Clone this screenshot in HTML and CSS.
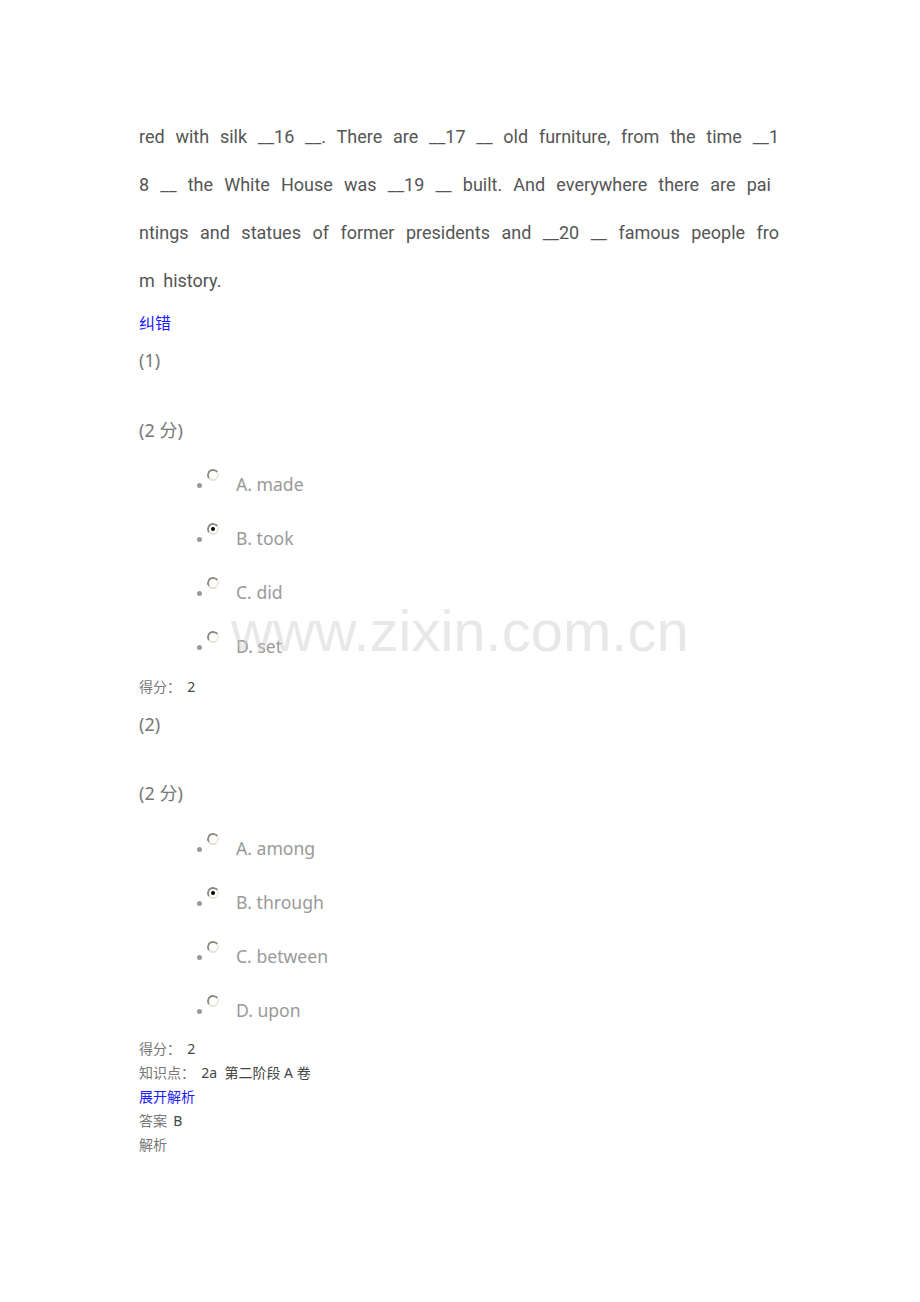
FILE: index.html
```
<!DOCTYPE html>
<html>
<head>
<meta charset="utf-8">
<link rel="stylesheet" href="styles.css">
</head>
<body>
<div class="page">
  <div class="passage">
    <div class="pline">red with silk __16 __. There are __17 __ old furniture, from the time __1</div>
    <div class="pline short">8 __ the White House was __19 __ built. And everywhere there are pai</div>
    <div class="pline">ntings and statues of former presidents and __20 __ famous people fro</div>
    <div class="pline last">m history.</div>
  </div>
  <div class="link first">纠错</div>

  <div class="qnum">(1)</div>
  <div class="score">(2 分)</div>
  <ul class="opts">
    <li><span class="radio"></span>A. made</li>
    <li><span class="radio on"></span>B. took</li>
    <li><span class="radio"></span>C. did</li>
    <li><span class="radio"></span>D. set</li>
  </ul>
  <div class="small gain">得分：&nbsp;&nbsp;<span class="val">2</span></div>

  <div class="qnum q2">(2)</div>
  <div class="score s2">(2 分)</div>
  <ul class="opts o2">
    <li><span class="radio"></span>A. among</li>
    <li><span class="radio on"></span>B. through</li>
    <li><span class="radio"></span>C. between</li>
    <li><span class="radio"></span>D. upon</li>
  </ul>
  <div class="small gain g2">得分：&nbsp;&nbsp;<span class="val">2</span></div>
  <div class="small">知识点：&nbsp;&nbsp;<span class="val">2a&nbsp; 第二阶段 A 卷</span></div>
  <div class="small link">展开解析</div>
  <div class="small">答案&nbsp;&nbsp;<span class="val">B</span></div>
  <div class="small">解析</div>

  <div class="watermark">www.zixin.com.cn</div>
</div>
</body>
</html>
```
FILE: styles.css
```
html, body {
  margin: 0;
  padding: 0;
  background: #fff;
}
.page {
  position: relative;
  width: 920px;
  height: 1302px;
  padding: 113px 0 0 139px;
  box-sizing: border-box;
  font-family: "Noto Sans", "Noto Sans CJK SC", sans-serif;
}
.passage {
  width: 640px;
  font-family: Roboto, "Noto Sans", sans-serif;
  font-size: 18px;
  color: #555;
}
.pline {
  line-height: 48px;
  height: 48px;
  text-align: justify;
  text-align-last: justify;
  white-space: nowrap;
}
.pline.short {
  padding-right: 8px;
}
.pline.last {
  text-align-last: left;
  word-spacing: 4px;
}
.link {
  color: #1a1aff;
  font-size: 16px;
  font-family: "Noto Sans CJK SC", sans-serif;
}
.link.first {
  margin-top: 5px;
  line-height: 24px;
}
.qnum, .score {
  font-size: 18px;
  color: #777;
  line-height: 26px;
}
.qnum {
  margin-top: 13px;
}
.score {
  margin-top: 44px;
}
.score.s2 {
  margin-top: 43px;
}
.opts {
  list-style: none;
  margin: 26px 0 0 0;
  padding: 0 0 0 58px;
}
.opts.o2 {
  margin-top: 27px;
}
.opts li {
  position: relative;
  height: 54px;
  line-height: 30px;
  font-size: 17.6px;
  color: #999;
  padding-left: 39px;
}
.opts li::before {
  content: "";
  position: absolute;
  left: 0;
  top: 14px;
  width: 5px;
  height: 5px;
  border-radius: 50%;
  background: #999;
}
.radio {
  position: absolute;
  left: 10px;
  top: 0;
  width: 12px;
  height: 12px;
  border-radius: 50%;
  border: 2px solid #8f8b80;
  border-right-color: #ecebdc;
  border-bottom-color: #e4e2d2;
  box-sizing: border-box;
  background: #fff;
  transform: rotate(10deg);
}
.radio.on::after {
  content: "";
  position: absolute;
  left: 2px;
  top: 2px;
  width: 4px;
  height: 4px;
  border-radius: 50%;
  background: #000;
}
.small {
  font-size: 14px;
  line-height: 24px;
  height: 24px;
  color: #777;
  font-family: "Noto Sans CJK SC", sans-serif;
}
.small .val {
  color: #444;
  line-height: 1;
  font-family: "Noto Sans", "Noto Sans CJK SC", sans-serif;
}
.small.link {
  color: #1a1aff;
}
.gain {
  margin-top: -11px;
}
.gain.g2 {
  margin-top: -13px;
}
.q2 {
  margin-top: 13px;
}
.watermark {
  position: absolute;
  left: 231px;
  top: 597px;
  font-family: "Liberation Sans", Arial, sans-serif;
  font-size: 58px;
  color: rgba(200, 200, 200, 0.42);
  pointer-events: none;
}
```
